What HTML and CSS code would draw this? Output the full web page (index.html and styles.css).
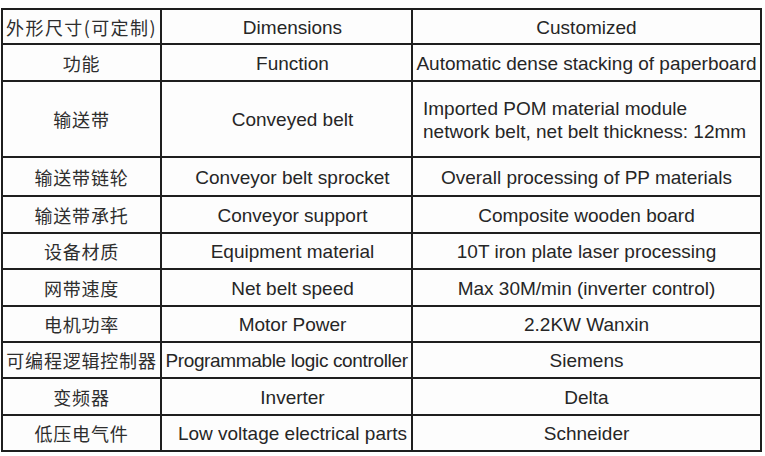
FILE: index.html
```html
<!DOCTYPE html>
<html lang="zh">
<head>
<meta charset="utf-8">
<title>Specifications</title>
<link rel="stylesheet" href="styles.css">
</head>
<body>
<div class="spec" role="table">
  <div class="c zh wide">外形尺寸(可定制)</div><div class="c mid">Dimensions</div><div class="c">Customized</div>
  <div class="c zh">功能</div><div class="c mid">Function</div><div class="c">Automatic dense stacking of paperboard</div>
  <div class="c zh">输送带</div><div class="c mid">Conveyed belt</div><div class="c left">Imported POM material module<br>network belt, net belt thickness: 12mm</div>
  <div class="c zh">输送带链轮</div><div class="c mid">Conveyor belt sprocket</div><div class="c">Overall processing of PP materials</div>
  <div class="c zh">输送带承托</div><div class="c mid">Conveyor support</div><div class="c">Composite wooden board</div>
  <div class="c zh">设备材质</div><div class="c mid">Equipment material</div><div class="c">10T iron plate laser processing</div>
  <div class="c zh">网带速度</div><div class="c mid">Net belt speed</div><div class="c">Max 30M/min (inverter control)</div>
  <div class="c zh">电机功率</div><div class="c mid">Motor Power</div><div class="c">2.2KW Wanxin</div>
  <div class="c zh">可编程逻辑控制器</div><div class="c tighter">Programmable logic controller</div><div class="c">Siemens</div>
  <div class="c zh">变频器</div><div class="c mid">Inverter</div><div class="c">Delta</div>
  <div class="c zh">低压电气件</div><div class="c mid">Low voltage electrical parts</div><div class="c">Schneider</div>
</div>
</body>
</html>
```
FILE: styles.css
```css
html, body {
  margin: 0;
  padding: 0;
  background: #ffffff;
}
body {
  padding: 8px 0 0 1px;
  font-family: "Liberation Sans", Arial, "Noto Sans CJK SC", sans-serif;
  color: #262626;
}
.spec {
  display: grid;
  grid-template-columns: 159px 251px 349px;
  grid-template-rows: 35px 37px 76px 39px 37px 36px 37px 36px 36px 37px 36px;
  width: max-content;
  border-top: 2px solid #1e1e1e;
  border-left: 2px solid #1e1e1e;
  background: #fdfdfd;
}
.c {
  box-sizing: border-box;
  border-right: 2px solid #1e1e1e;
  border-bottom: 2px solid #1e1e1e;
  display: flex;
  align-items: center;
  justify-content: center;
  text-align: center;
  font-size: 19px;
  padding-top: 2px;
  white-space: nowrap;
  overflow: hidden;
}
.zh {
  font-family: "Noto Sans CJK SC", "Noto Sans", sans-serif;
  font-size: 18px;
  letter-spacing: 0.8px;
  padding-top: 0;
  color: #2e2e2e;
}
.wide {
  letter-spacing: 1.4px;
}
.mid {
  padding-left: 12px;
}
.tighter {
  letter-spacing: -0.35px;
}
.left {
  justify-content: flex-start;
  text-align: left;
  padding-left: 10px;
  line-height: 23px;
}
```
